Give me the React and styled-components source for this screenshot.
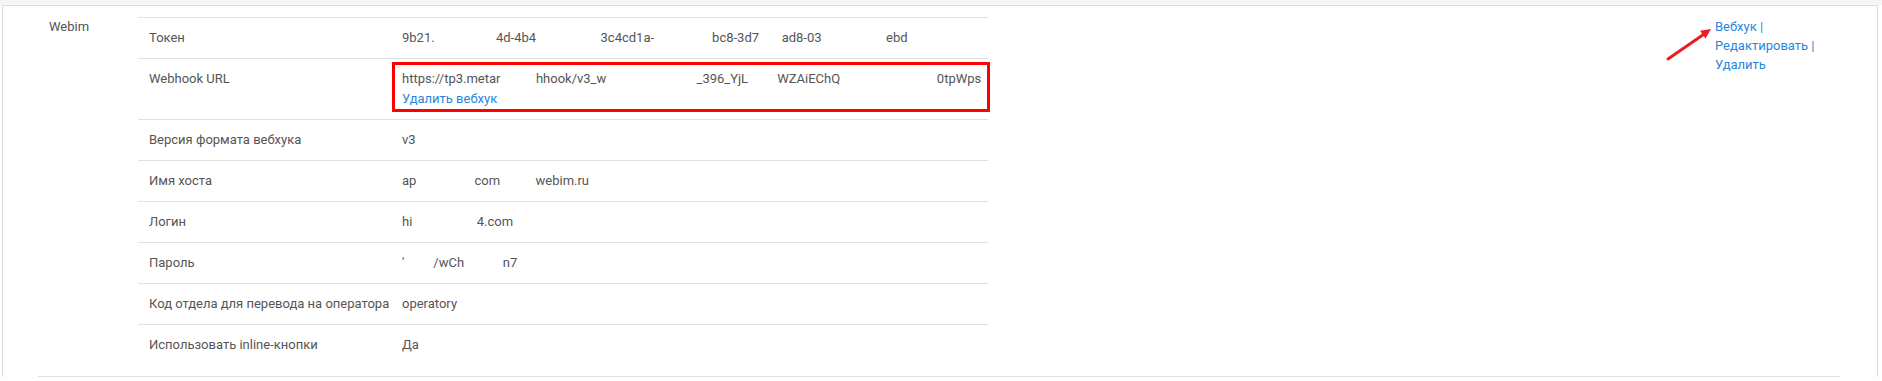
import React from "react";
import styled, { createGlobalStyle } from "styled-components";

const GlobalStyle = createGlobalStyle`
  html, body { margin: 0; padding: 0; background: #fff; }
  body {
    font-family: Roboto, "Liberation Sans", Arial, sans-serif;
    font-size: 13px;
    color: #555;
  }
`;

const TopStrip = styled.div`
  height: 5px;
  background: #f6f6f6;
`;

const Card = styled.div`
  margin-left: 2px;
  width: 1876px;
  box-sizing: border-box;
  border: 1px solid #dcdcdc;
  border-bottom: none;
  padding: 0 37px 0 35px;
  background: #fff;
`;

const OuterRow = styled.div`
  display: grid;
  grid-template-columns: 100px 850px 1fr 136px;
  border-bottom: 1px solid #e0e0e0;
`;

const NameCell = styled.div`
  padding: 11px;
  line-height: 19px;
`;

const InnerCell = styled.div`
  padding: 11px 0;
`;

const Spacer = styled.div``;

const ActionsCell = styled.div`
  position: relative;
  padding: 11px;
  line-height: 19px;
`;

const InnerTable = styled.div`
  display: grid;
  grid-template-columns: 253px 597px;
`;

const Cell = styled.div`
  position: relative;
  border-top: 1px solid #e0e0e0;
  padding: 10px 11px 11px;
  line-height: 19px;
  white-space: ${(p) => (p.$pre ? "pre" : "nowrap")};
`;

const Line = styled.div`
  white-space: pre;
`;

const Link = styled.a`
  color: #2a86dc;
  text-decoration: none;
  cursor: pointer;
  display: block;
  margin-top: ${(p) => p.$gap || 0}px;
`;

const Highlight = styled.span`
  position: absolute;
  left: 1px;
  top: 3px;
  right: -2px;
  bottom: 7px;
  border: 3px solid #f00;
  box-sizing: border-box;
  pointer-events: none;
`;

const Arrow = styled.svg`
  position: absolute;
  left: -40px;
  top: 18px;
  overflow: visible;
`;

const sp = (n) => " ".repeat(n);

const rows = [
  ["Токен", "9b21." + sp(19) + "4d-4b4" + sp(20) + "3c4cd1a-" + sp(18) + "bc8-3d7" + sp(7) + "ad8-03" + sp(20) + "ebd"],
  ["Webhook URL", null],
  ["Версия формата вебхука", "v3"],
  ["Имя хоста", "ap" + sp(18) + "com" + sp(11) + "webim.ru"],
  ["Логин", "hi" + sp(20) + "4.com"],
  ["Пароль", "'" + sp(9) + "/wCh" + sp(12) + "n7"],
  ["Код отдела для перевода на оператора", "operatory"],
  ["Использовать inline-кнопки", "Да"],
];

const URL_TEXT = "https://tp3.metar" + sp(11) + "hhook/v3_w" + sp(28) + "_396_YjL" + sp(9) + "WZAiEChQ" + sp(30) + "0tpWps";

export default function App() {
  return (
    <>
      <GlobalStyle />
      <TopStrip />
      <Card>
        <OuterRow>
          <NameCell>Webim</NameCell>
          <InnerCell>
            <InnerTable>
              {rows.map(([label, value]) => (
                <React.Fragment key={label}>
                  <Cell>{label}</Cell>
                  {value === null ? (
                    <Cell>
                      <Line>{URL_TEXT}</Line>
                      <Link $gap={1}>Удалить вебхук</Link>
                      <Highlight />
                    </Cell>
                  ) : (
                    <Cell $pre>{value}</Cell>
                  )}
                </React.Fragment>
              ))}
            </InnerTable>
          </InnerCell>
          <Spacer />
          <ActionsCell>
            <Arrow width="52" height="46" viewBox="0 0 52 46">
              <line x1="4" y1="35" x2="39.5" y2="10.5" stroke="#ec1c24" strokeWidth="3" strokeLinecap="round" />
              <polygon points="47,5 41.6,14.6 36,6.8" fill="#ec1c24" />
            </Arrow>
            <Link>Вебхук |</Link>
            <Link>Редактировать |</Link>
            <Link>Удалить</Link>
          </ActionsCell>
        </OuterRow>
      </Card>
    </>
  );
}
